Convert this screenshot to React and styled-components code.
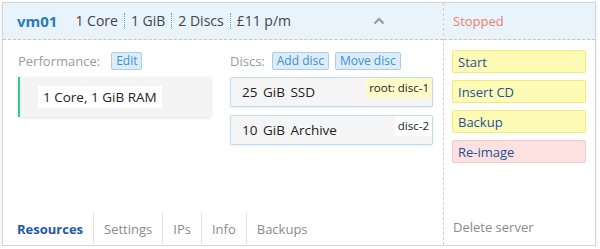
import React from 'react'
import styled, { createGlobalStyle } from 'styled-components';

const GlobalStyle = createGlobalStyle`
    body {
        margin: 0;
        background: #ffffff;
        font-family: "Open Sans", "DejaVu Sans", sans-serif;
    }
`

const Card = styled.div`
    margin: 2px 0 0 2px;
    width: 594px;
    height: 244px;
    border: 1px solid #d6d6d6;
    box-shadow: 0 1px 3px rgba(0, 0, 0, 0.12);
    display: grid;
    grid-template-columns: 440px 1fr;
    box-sizing: border-box;
`

const Main = styled.div`
    display: flex;
    flex-direction: column;
`

const Side = styled.div`
    display: flex;
    flex-direction: column;
    border-left: 1px dashed #cfcfcf;
`

const Header = styled.div`
    height: 36px;
    background: #e8f3fb;
    border-bottom: 1px dashed #c8c8c8;
    display: flex;
    align-items: center;
    padding: 0 14px 0 14px;
`

const Name = styled.span`
    font-size: 15px;
    font-weight: 700;
    color: #2b7bbd;
    margin-right: 18px;
`

const Spec = styled.span`
    font-size: 14px;
    color: #444;
    padding: ${p => (p.first ? '0 6px 0 0' : '0 6px')};
    border-left: ${p => (p.first ? 'none' : '1px dotted #6a9fcf')};
    line-height: 16px;
`

const Chevron = styled.span`
    margin-left: auto;
    margin-right: 44px;
    display: flex;
`

const Body = styled.div`
    flex: 1;
    display: flex;
    gap: 19px;
    padding: 12px 8px 0 15px;
`

const Column = styled.div`
    display: flex;
    flex-direction: column;
    width: ${p => p.width};
`

const LabelRow = styled.div`
    display: flex;
    align-items: center;
    height: 18px;
    margin-bottom: 7px;
`

const Label = styled.span`
    font-size: 13px;
    color: #9a9a9a;
    margin-right: ${p => p.gap || '10px'};
`

const SmallButton = styled.span`
    font-size: 12px;
    color: #3f8fd0;
    background: #dcecf8;
    border: 1px solid #a9cdea;
    border-radius: 2px;
    padding: 0 4px;
    line-height: 16px;
    margin-right: 6px;
`

const PerfBox = styled.div`
    height: 40px;
    background: #f4f4f4;
    border-left: 2px solid #2ecc8f;
    box-shadow: 0 1px 3px rgba(0, 0, 0, 0.12);
    display: flex;
    align-items: center;
    padding-left: 18px;
`

const PerfText = styled.span`
    background: #ffffff;
    font-size: 13.5px;
    color: #222;
    padding: 2px 5px;
`

const Disc = styled.div`
    position: relative;
    height: 28px;
    background: #f5f5f5;
    border: 1px solid #bfdcf2;
    border-radius: 2px;
    box-shadow: 0 1px 2px rgba(0, 0, 0, 0.08);
    display: flex;
    align-items: center;
    padding-left: 11px;
    font-size: 13.5px;
    color: #222;
    margin-bottom: 8px;
    word-spacing: 2px;
`

const Tag = styled.span`
    position: absolute;
    top: 0;
    right: 0;
    font-size: 11.5px;
    line-height: 20px;
    padding: 0 3px;
    background: ${p => (p.root ? '#fffac8' : '#ffffff')};
    color: #222;
    word-spacing: 0;
`

const Tabs = styled.div`
    display: flex;
    height: 31px;
    padding-left: 4px;
    margin-bottom: 1px;
`

const Tab = styled.div`
    display: flex;
    align-items: center;
    padding: 0 10px;
    font-size: 13px;
    font-weight: ${p => (p.active ? 700 : 400)};
    color: ${p => (p.active ? '#1d5aa8' : '#8a8a8a')};
    border-left: ${p => (p.first ? 'none' : '1px solid #e2e2e2')};
`

const Status = styled.div`
    height: 36px;
    background: #e8f3fb;
    border-bottom: 1px dashed #c8c8c8;
    display: flex;
    align-items: center;
    padding-left: 9px;
    font-size: 13px;
    color: #ec7f72;
`

const Actions = styled.div`
    display: flex;
    flex-direction: column;
    gap: 7px;
    padding: 10px 9px 0 8px;
    flex: 1;
`

const Action = styled.div`
    height: 23px;
    box-sizing: border-box;
    display: flex;
    align-items: center;
    padding-left: 5px;
    font-size: 13px;
    color: #1f4f9c;
    border-radius: 2px;
    background: ${p => (p.danger ? '#fbe2e0' : '#fdfbb6')};
    border: 1px solid ${p => (p.danger ? '#f6cbc7' : '#f3ea78')};
`

const Delete = styled.div`
    padding: 0 0 9px 9px;
    font-size: 13px;
    color: #8a8a8a;
`

function App() {
    return (
        <>
            <GlobalStyle />
            <Card>
                <Main>
                    <Header>
                        <Name>vm01</Name>
                        <Spec first>1 Core</Spec>
                        <Spec>1 GiB</Spec>
                        <Spec>2 Discs</Spec>
                        <Spec>£11 p/m</Spec>
                        <Chevron>
                            <svg width="12" height="8" viewBox="0 0 12 8">
                                <path d="M1.5 6.5 L6 2 L10.5 6.5" stroke="#9a9a9a" strokeWidth="2.2" fill="none" />
                            </svg>
                        </Chevron>
                    </Header>
                    <Body>
                        <Column width="193px">
                            <LabelRow>
                                <Label gap="11px">Performance:</Label>
                                <SmallButton>Edit</SmallButton>
                            </LabelRow>
                            <PerfBox>
                                <PerfText>1 Core, 1 GiB RAM</PerfText>
                            </PerfBox>
                        </Column>
                        <Column width="203px">
                            <LabelRow>
                                <Label gap="7px">Discs:</Label>
                                <SmallButton>Add disc</SmallButton>
                                <SmallButton>Move disc</SmallButton>
                            </LabelRow>
                            <Disc>
                                25 GiB SSD
                                <Tag root>root: disc-1</Tag>
                            </Disc>
                            <Disc>
                                10 GiB Archive
                                <Tag>disc-2</Tag>
                            </Disc>
                        </Column>
                    </Body>
                    <Tabs>
                        <Tab first active>Resources</Tab>
                        <Tab>Settings</Tab>
                        <Tab>IPs</Tab>
                        <Tab>Info</Tab>
                        <Tab>Backups</Tab>
                    </Tabs>
                </Main>
                <Side>
                    <Status>Stopped</Status>
                    <Actions>
                        <Action>Start</Action>
                        <Action>Insert CD</Action>
                        <Action>Backup</Action>
                        <Action danger>Re-image</Action>
                    </Actions>
                    <Delete>Delete server</Delete>
                </Side>
            </Card>
        </>
    )
}

export default App
